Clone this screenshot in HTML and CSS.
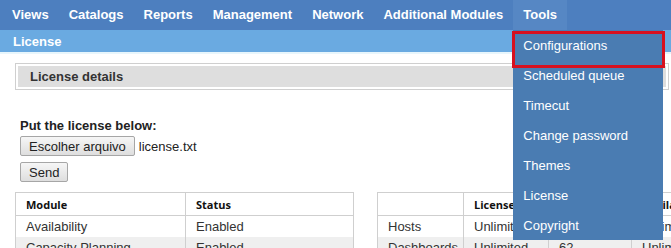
FILE: index.html
```html
<!DOCTYPE html>
<html lang="en">
<head>
<meta charset="UTF-8">
<title>License</title>
<link rel="stylesheet" href="styles.css">
</head>
<body>

<!-- Main menu -->
<nav class="menubar">
    <ul class="menu">
        <li class="menu-item">Views</li>
        <li class="menu-item">Catalogs</li>
        <li class="menu-item">Reports</li>
        <li class="menu-item">Management</li>
        <li class="menu-item">Network</li>
        <li class="menu-item">Additional Modules</li>
        <li class="menu-item open">Tools
            <ul class="dropdown">
                <li class="dropdown-item marked">Configurations</li>
                <li class="dropdown-item">Scheduled queue</li>
                <li class="dropdown-item">Timecut</li>
                <li class="dropdown-item">Change password</li>
                <li class="dropdown-item">Themes</li>
                <li class="dropdown-item">License</li>
                <li class="dropdown-item">Copyright</li>
            </ul>
        </li>
    </ul>
</nav>

<div class="subbar">License</div>

<main class="content">
    <div class="panel">
        <div class="panel-title">License details</div>
    </div>

    <form class="upload">
        <div class="upload-label">Put the license below:</div>
        <div class="file-row">
            <button type="button" class="btn">Escolher arquivo</button>
            <span class="file-name">license.txt</span>
        </div>
        <button type="button" class="btn">Send</button>
    </form>

    <div class="tables">
        <table class="grid grid-modules">
            <tr><th>Module</th><th>Status</th></tr>
            <tr><td>Availability</td><td>Enabled</td></tr>
            <tr><td>Capacity Planning</td><td>Enabled</td></tr>
            <tr><td>Reports</td><td>Enabled</td></tr>
        </table>

        <table class="grid grid-limits">
            <tr><th></th><th>License</th><th>Used</th><th>Available</th></tr>
            <tr><td>Hosts</td><td>Unlimited</td><td>118</td><td>Unlimited</td></tr>
            <tr><td>Dashboards</td><td>Unlimited</td><td>62</td><td>Unlimited</td></tr>
            <tr><td>Users</td><td>Unlimited</td><td>14</td><td>Unlimited</td></tr>
        </table>
    </div>
</main>

</body>
</html>
```

FILE: styles.css
```css
/* ===== GLOBAL ===== */
*{box-sizing:border-box;margin:0;padding:0;}
html,body{overflow:hidden;}
body{
    font-family:"Liberation Sans",Arial,sans-serif;
    font-size:13px;
    color:#333;
    background:#fff;
}

/* ===== MENU BAR ===== */
.menubar{
    height:30px;
    background:#4d7fbf;
}
.menu{
    display:flex;
    list-style:none;
    padding-left:2px;
}
.menu-item{
    position:relative;
    padding:0 10px;
    line-height:30px;
    font-weight:700;
    color:#fff;
}
.menu-item.open{background:#5687c4;}

/* dropdown */
.dropdown{
    position:absolute;
    top:30px;
    left:0;
    width:150px;
    list-style:none;
    background:#4a7cb2;
    z-index:5;
}
.dropdown-item{
    position:relative;
    height:30px;
    line-height:31px;
    padding-left:10px;
    font-weight:400;
    color:#fff;
}
.dropdown-item.marked::after{
    content:'';
    position:absolute;
    left:-1px;
    top:1px;
    width:147px;
    height:31px;
    border:3px solid #d7101f;
}

/* ===== SUB BAR ===== */
.subbar{
    height:24px;
    line-height:24px;
    padding-left:13px;
    background:#6aaae1;
    color:#fff;
    font-weight:700;
    border-bottom:2px solid #e8f6fc;
}

/* ===== CONTENT ===== */
.content{padding:9px 2px 0 15px;}

.panel{
    border:1px solid #cfcfcf;
    padding:2px;
}
.panel-title{
    height:21px;
    line-height:22px;
    padding-left:12px;
    background:#dedede;
    font-weight:700;
    color:#333;
}

/* upload form */
.upload{
    padding:28px 0 0 5px;
    color:#222;
}
.upload-label{
    font-weight:700;
    line-height:15px;
}
.file-row{
    display:flex;
    align-items:center;
    gap:4px;
    margin:3px 0 6px;
}
.btn{
    height:20px;
    padding:0 8px;
    font-family:inherit;
    font-size:13px;
    color:#222;
    background:linear-gradient(#f6f6f6,#dedede);
    border:1px solid #a6a6a6;
    border-radius:2px;
}

/* ===== TABLES ===== */
.tables{
    display:flex;
    gap:23px;
    margin-top:10px;
}
.grid{
    flex-shrink:0;
    width:339px;
    table-layout:fixed;
    border-collapse:collapse;
    border:1px solid #cfcfcf;
}
.grid th,.grid td{
    text-align:left;
    padding:0 10px;
    border-left:1px solid #cfcfcf;
    white-space:nowrap;
    overflow:hidden;
}
.grid th{
    height:23px;
    font-family:"Open Sans",sans-serif;
    font-size:11px;
    font-weight:700;
    color:#111;
    border-bottom:1px solid #cfcfcf;
}
.grid td{height:21px;}
.grid tr:nth-child(odd) td{background:#efefef;}

.grid-modules th:first-child{width:170px;}
.grid-limits th:nth-child(1){width:86px;}
.grid-limits th:nth-child(2){width:85px;}
.grid-limits th:nth-child(3){width:83px;}
```
